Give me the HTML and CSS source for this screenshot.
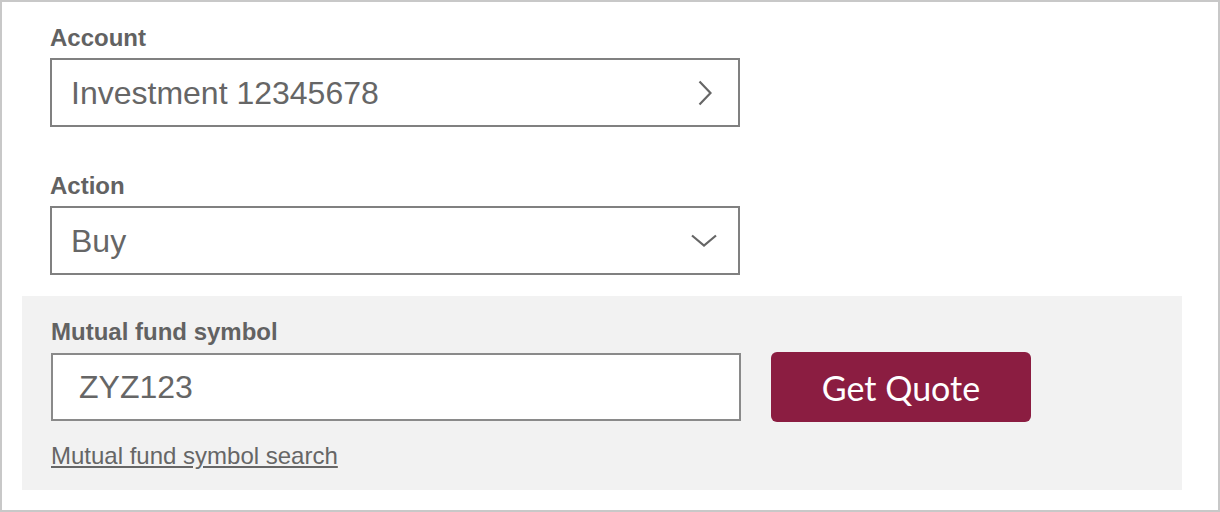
FILE: index.html
```html
<!DOCTYPE html>
<html lang="en">
<head>
    <meta charset="UTF-8">
    <title>Trade Mutual Funds</title>
    <link rel="stylesheet" href="styles.css">
</head>
<body>

    <div class="trade-form">
        <div class="field">
            <div class="field-label">Account</div>
            <div class="select-box">
                <span>Investment 12345678</span>
                <svg class="chevron-right" width="14" height="26" viewBox="0 0 14 26">
                    <path d="M1.5 1.5 L12.5 13 L1.5 24.5" fill="none" stroke="#666" stroke-width="2.2"/>
                </svg>
            </div>
        </div>

        <div class="field">
            <div class="field-label">Action</div>
            <div class="select-box">
                <span>Buy</span>
                <svg class="chevron-down" width="26" height="13" viewBox="0 0 26 13">
                    <path d="M1 1.5 L13 11.5 L25 1.5" fill="none" stroke="#666" stroke-width="2.2"/>
                </svg>
            </div>
        </div>

        <!-- symbol lookup -->
        <div class="symbol-panel">
            <div class="field-label">Mutual fund symbol</div>
            <div class="symbol-row">
                <div class="symbol-input">ZYZ123</div>
                <button class="quote-btn">Get Quote</button>
            </div>
            <a href="#" class="symbol-link">Mutual fund symbol search</a>
        </div>
    </div>

</body>
</html>
```

FILE: styles.css
```css
body {
    margin: 0;
    padding: 0;
    font-family: 'Liberation Sans', Arial, sans-serif;
    background: #fff;
    color: #666;
}

.trade-form {
    width: 1220px;
    height: 512px;
    box-sizing: border-box;
    border: 2px solid #c8c8c8;
    padding: 22px 0 0 0;
}

.field {
    padding-left: 48px;
    margin-bottom: 45px;
}

.field + .field {
    margin-bottom: 21px;
}

.field-label {
    font-size: 24px;
    line-height: 28px;
    font-weight: bold;
    color: #626262;
    margin-bottom: 6px;
}

.select-box {
    width: 690px;
    height: 69px;
    box-sizing: border-box;
    border: 2px solid #808080;
    display: flex;
    align-items: center;
    justify-content: space-between;
    padding: 0 0 0 19px;
    font-size: 32px;
    line-height: 36px;
    color: #666;
}

.chevron-right {
    margin-right: 26px;
}

.chevron-down {
    margin-right: 21px;
}

.symbol-panel {
    background: #f2f2f2;
    margin: 0 36px 0 20px;
    padding: 22px 29px 20px 29px;
}

.symbol-row {
    display: flex;
    align-items: center;
    gap: 30px;
}

.symbol-input {
    width: 690px;
    height: 68px;
    box-sizing: border-box;
    border: 2px solid #8a8a8a;
    background: #fff;
    padding-left: 26px;
    font-size: 32px;
    line-height: 64px;
    color: #666;
}

.quote-btn {
    width: 260px;
    height: 70px;
    border: none;
    border-radius: 6px;
    background: #8b1d41;
    color: #fff;
    font-family: Lato, 'Open Sans', sans-serif;
    font-size: 34px;
    cursor: pointer;
}

.symbol-link {
    display: inline-block;
    margin-top: 20px;
    font-size: 24px;
    line-height: 28px;
    color: #666;
    text-decoration: underline;
}
```
